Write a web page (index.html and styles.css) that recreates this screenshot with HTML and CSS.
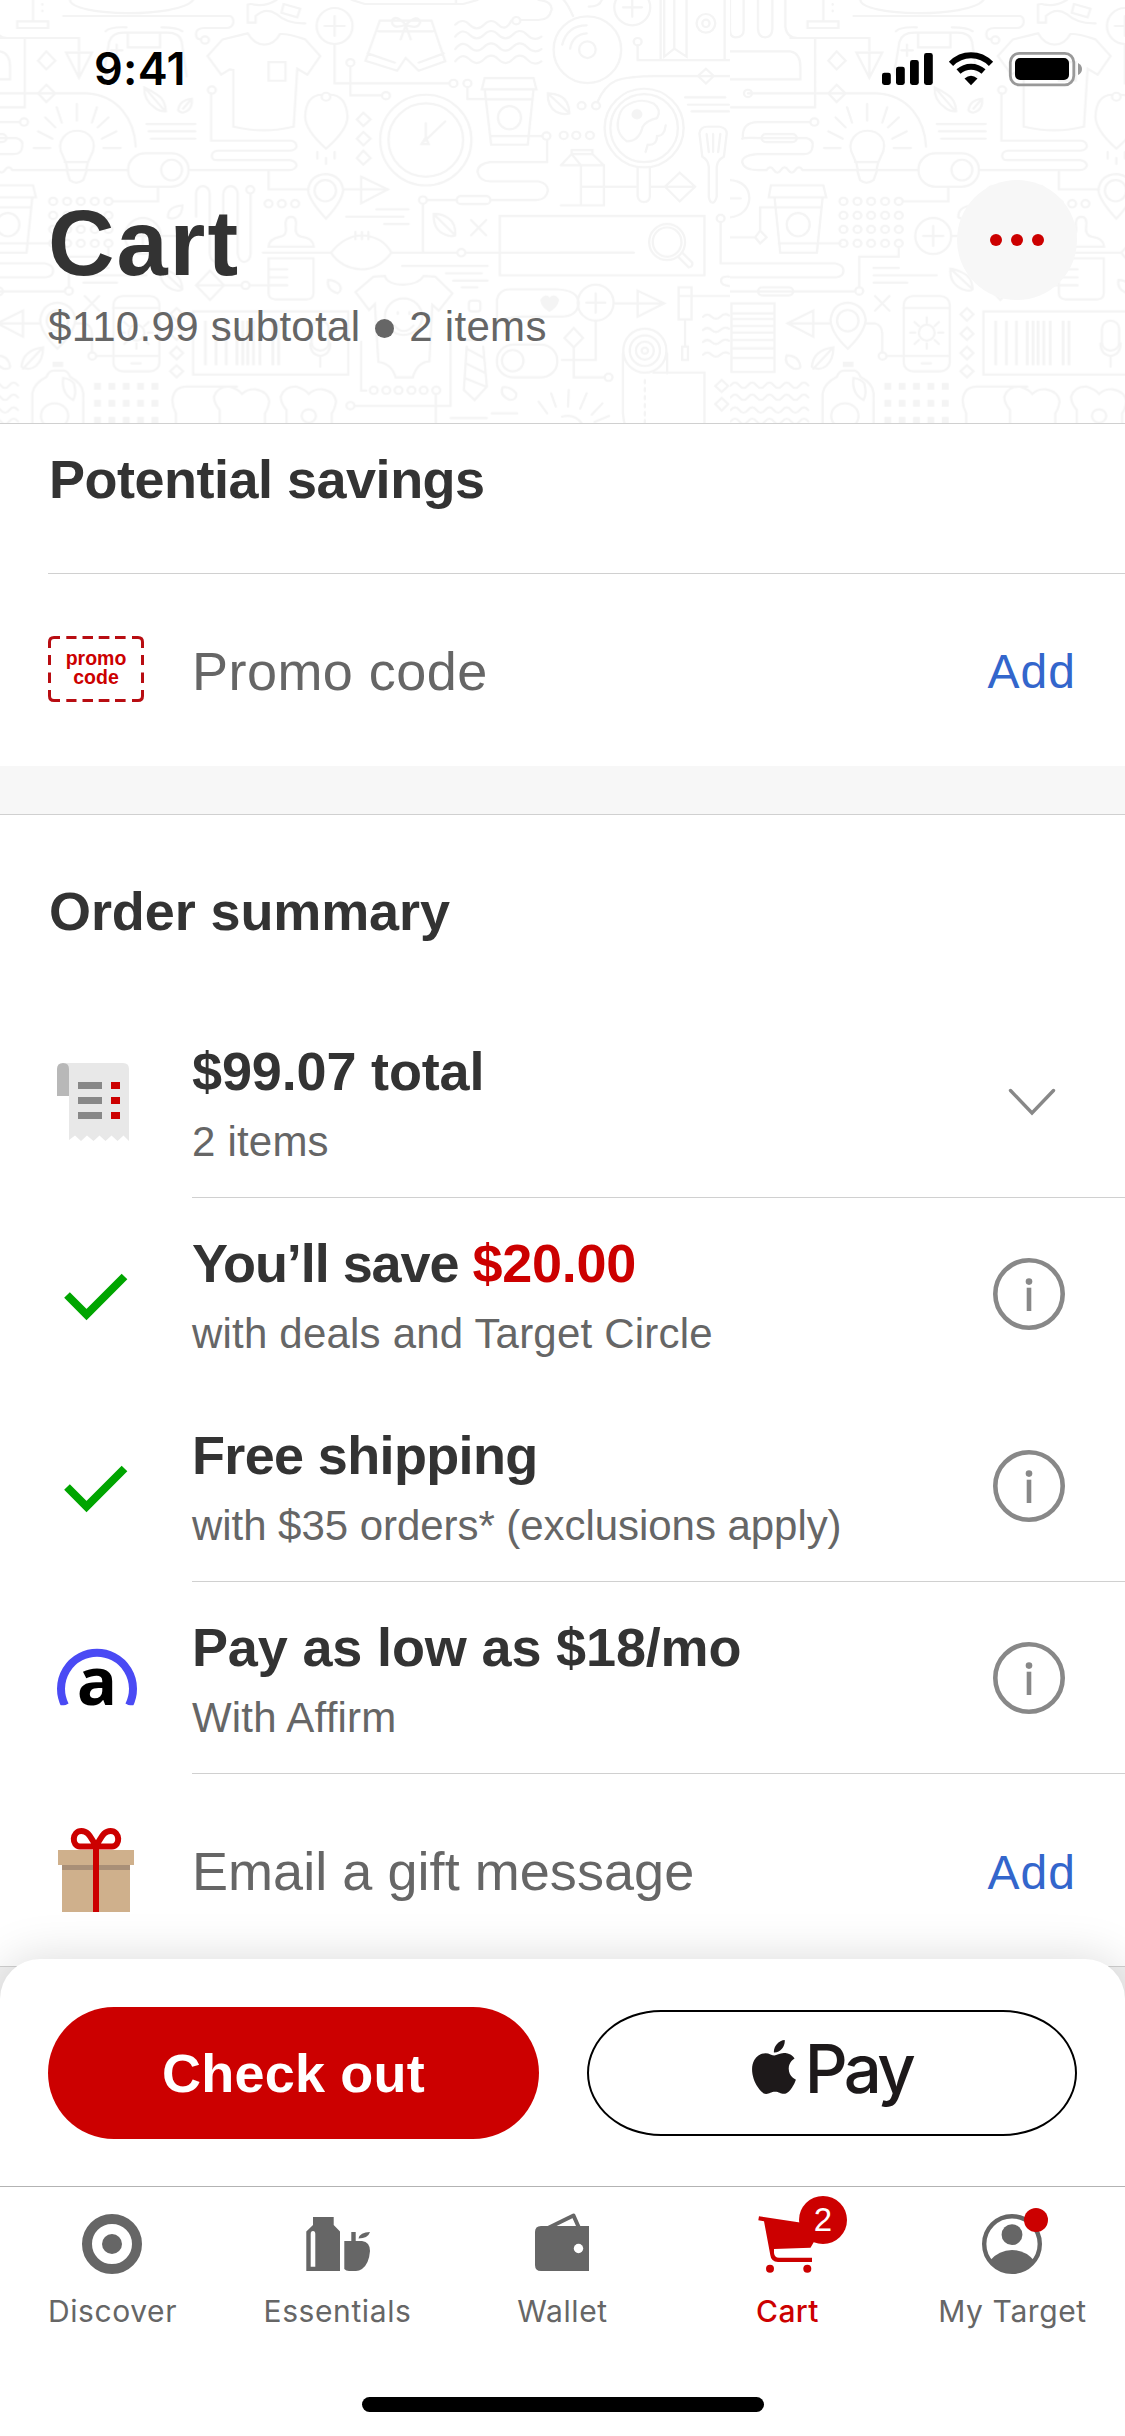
FILE: index.html
```html
<!DOCTYPE html>
<html lang="en">
<head>
<meta charset="utf-8">
<title>Cart</title>
<link rel="stylesheet" href="styles.css">
</head>
<body>
<div class="app">
  <header class="header">
    <svg class="doodles" width="1125" height="423" viewBox="0 0 1125 423">
      <defs>
        <pattern id="tile" x="-168" y="0" width="2201" height="1400" patternUnits="userSpaceOnUse" patternTransform="scale(0.35906 0.33333)" viewBox="-168 0 2201 1400">
          <g fill="none" stroke="#f4f4f4" stroke-width="6.5" stroke-linecap="round">
            <!-- laptop, sewing lines, game pad -->
            <path d="M92 0V62M48 64H134V84H48ZM118 12v2M118 32v2M195 0C200 50 500 55 538 0M176 48H640Q650 50 650 66Q648 84 630 84H570Q546 84 546 102Q546 118 558 118M0 114H220V152M-168 0V90Q-168 112-152 112Q-130 112-130 90V0M-90 0V85Q-90 112-70 112Q-50 112-50 85V0M-14 0V80Q-10 114 20 114"/>
            <circle cx="571" cy="120" r="11"/>
            <path d="M69 114V322H-166M184 158H256L220 234ZM220 158V234M129 154L154 182L129 208L106 182ZM129 254L154 280L129 306L106 280ZM-118 280H240C330 285 374 360 378 440M-168 154H0Q28 160 28 200V238H-168"/>
            <circle cx="-118" cy="280" r="11"/>
            <path d="M294 94Q305 80 352 82M450 82Q495 82 508 94M300 230Q285 220 294 190L304 125Q312 98 345 98H465Q500 98 506 125L520 230M356 98V142H446V98M325 134v34M309 151h32M402 262Q400 300 430 322Q445 336 462 334Q460 300 440 286Q420 270 402 262ZM402 262L460 334M534 296Q500 300 496 330Q500 338 510 338Q538 330 534 296ZM534 296L510 326M408 372H544M414 394H544M420 416H544"/>
            <!-- light bulb -->
            <path d="M214 312V362M158 322L172 368M270 322L256 368M126 352L154 382M302 352L272 382M106 394L146 416M324 394L284 416M94 444H140M288 444H336M188 510Q186 490 176 470C150 420 190 392 214 392C244 392 278 420 252 470Q242 490 240 510M180 486H246M186 510L194 540Q212 556 232 540L242 510M-132 416Q-136 366-90 366H55M-134 416Q-130 412-84 414H45Q66 420 62 440Q60 462 40 462H-92Q-134 466-134 486Q-130 510-90 510H-66q10-16 20 0t20 0t20 0t20 0t20 0H355"/>
            <circle cx="67" cy="366" r="11"/><rect x="-80" y="402" width="98" height="24" rx="12"/>
            <rect x="357" y="460" width="168" height="100" rx="48"/><ellipse cx="478" cy="510" rx="29" ry="31"/>
            <!-- shoe, shirt -->
            <path d="M690 14V68H712V48Q740 20 770 42Q800 72 850 70M690 14Q700 10 708 14Q740 20 770 0M790 12L836 26L828 52L784 38ZM650 210L640 208L616 224L578 168L620 118L690 100Q708 134 736 134Q764 134 780 102Q800 100 850 118L892 168L856 224L828 206L818 380Q736 402 650 380ZM748 186H795V242H748ZM588 280V422H812Q826 426 826 440Q822 452 806 452H606Q590 454 590 468Q590 482 606 480H806Q824 482 826 496Q822 510 806 510H525M748 510V568H860M958 568H1080"/>
            <circle cx="590" cy="270" r="11"/>
            <path d="M-168 540Q-116 545-114 595Q-118 645-168 652M-168 595H-138M-168 712H-98L-84 692L-66 712L-84 730L-98 712M-84 692V622H-40M-54 556H92L100 592H-60ZM-44 592L-28 758H74L90 592M-42 622H84M-32 730H140"/>
            <ellipse cx="22" cy="674" rx="32" ry="35"/>
            <!-- dot grid -->
            <g id="dots4"><circle cx="148" cy="604" r="11"/><circle cx="187" cy="604" r="11"/><circle cx="225" cy="604" r="11"/><circle cx="264" cy="604" r="11"/><circle cx="302" cy="604" r="11"/></g>
            <use href="#dots4" y="42"/><use href="#dots4" y="84"/><use href="#dots4" y="126"/>
            <path d="M316 604H440V562M-194 650V790H125Q148 795 148 812Q148 830 128 832H-168M-168 874H180M192 862V770H302V742M232 804H302M232 826H408M232 848H326"/>
            <circle cx="192" cy="873" r="11"/><rect x="-90" y="862" width="98" height="24" rx="12"/>
            <ellipse cx="398" cy="708" rx="50" ry="54"/><path d="M398 678V738M370 708H426M450 708H515M508 616Q466 620 468 652Q480 660 495 650Q508 640 508 616ZM446 806Q442 850 480 868Q500 876 508 868Q506 830 480 818Q460 808 446 806ZM446 806L508 868"/>
            <path d="M546 650V580Q548 560 565 558Q582 560 584 580V760Q586 785 604 786Q622 780 622 760V580Q626 558 644 558Q660 562 662 580V760Q664 784 680 786Q698 782 698 760V582M546 856L585 812L624 856L585 900ZM546 856H672M696 856H800"/>
            <circle cx="697" cy="569" r="11"/><circle cx="684" cy="856" r="11"/>
            <circle cx="748" cy="611" r="11"/><circle cx="785" cy="611" r="11"/><circle cx="822" cy="611" r="11"/>
            <!-- brush and jar -->
            <path d="M748 740H874Q872 714 840 710Q820 706 824 680Q828 650 810 650Q792 652 796 680Q800 708 780 710Q750 716 748 740ZM732 758H922M748 775H873V880Q872 898 855 898H765Q748 896 748 880ZM750 808H800M750 832H800M750 856H800M922 758Q960 706 1010 706Q1066 710 1090 758Q1056 808 1006 808Q950 804 922 758ZM990 696V718M1008 696V718M1026 696V718M914 840Q908 868 940 880Q956 870 944 852Q930 840 914 840Z"/>
            <!-- plus node, shorts, waves -->
            <ellipse cx="932" cy="78" rx="50" ry="54"/><path d="M932 48V108M904 78H960M932 134V250H1250M976 200V286H1064M1302 262V297H1350"/>
            <circle cx="976" cy="188" r="11"/><circle cx="1075" cy="287" r="11"/><circle cx="1263" cy="250" r="11"/><circle cx="1302" cy="250" r="11"/>
            <path d="M1058 62H1202L1240 184L1166 212L1130 174L1106 212L1018 182ZM1054 94H1206M1024 160L1100 188M1236 160L1166 188M1130 74Q1100 40 1092 62Q1090 90 1130 74Q1164 40 1170 66Q1166 90 1130 74ZM1130 76L1116 118M1130 76L1144 118M980 0L1016 12H1290L1330 0M1270 0V12M1500 0Q1540 5 1536 30Q1530 60 1500 60H1450"/>
            <path d="M1268 74q20-22 40 0t40 0t40 0t36 -12"/><circle cx="1438" cy="62" r="11"/>
            <g id="wave"><path d="M1268 110q20-28 40-6t40 0t40 0t40 0t40 0t40 6"/></g><use href="#wave" y="37"/><use href="#wave" y="74"/>
            <!-- pendant, pin -->
            <path d="M908 446Q850 390 850 350Q852 284 898 284M908 446Q968 390 968 350Q964 284 918 284M884 456v20M932 456v20M908 474v18M1012 338L1032 358L1012 378L994 358ZM1012 396L1032 416L1012 436L994 416ZM1012 452L1032 474L1012 494L994 474ZM908 656Q860 600 858 570Q864 524 908 522Q950 526 956 570Q952 606 908 656ZM1006 530L1080 568L1006 610Z"/>
            <circle cx="908" cy="290" r="12"/><ellipse cx="906" cy="572" rx="30" ry="32"/>
            <!-- clock -->
            <ellipse cx="1186" cy="420" rx="127" ry="136"/><ellipse cx="1186" cy="420" rx="104" ry="110"/><path d="M1186 370V420L1240 364M1186 412L1174 432H1194Z"/>
            <path d="M1048 628H1138M964 650H1124M1070 672H1138M1120 798H1358M1242 820H1342M1262 842H1358M1286 862H1330"/>
            <!-- coffee cup -->
            <path d="M1350 234H1486L1494 268H1342ZM1350 268L1368 434H1470L1486 268M1355 298H1482M1366 408H1510M1524 420V486H1365Q1330 492 1330 516Q1336 544 1365 544H1500Q1526 550 1526 572Q1522 598 1495 600H1366M1190 600H1272M1178 612V758M1090 758H1272M1298 758H1765"/>
            <ellipse cx="1419" cy="353" rx="32" ry="35"/><circle cx="1522" cy="408" r="11"/><circle cx="1178" cy="600" r="11"/><circle cx="1285" cy="758" r="11"/><rect x="1272" y="588" width="94" height="24" rx="12"/>
            <path d="M1208 642Q1206 690 1240 704Q1256 712 1268 706Q1270 670 1248 654Q1230 640 1208 642ZM1208 642L1268 706M1312 660L1354 706M1354 660L1312 706M1392 648H1962V826H1392ZM1526 280Q1524 320 1550 336Q1570 346 1586 340Q1584 300 1560 288Q1545 280 1526 280ZM1526 280L1586 340"/>
            <!-- baby suit -->
            <path d="M990 876L1040 830L1072 828Q1080 854 1124 854Q1166 852 1180 828L1212 830L1260 880L1222 932L1204 914L1196 1084Q1162 1086 1150 1132H1102Q1090 1090 1054 1086L1044 912L1028 930ZM1098 976Q1124 1010 1152 976M1108 936v6M1140 936v6M1006 1025V1172H1020M1255 1025V1218H990M1214 1184V1270M1285 1020H1350M1300 1040L1292 1170L1322 1200L1356 1160L1346 1040M1300 1046L1348 1074M1298 1090L1350 1118M1294 1134L1354 1160M1400 1162Q1390 1186 1420 1200Q1440 1200 1438 1180Q1420 1158 1400 1162ZM1500 1205L1524 1240M1535 1180L1548 1220M1255 1254H1356M1370 1240H1440"/>
            <ellipse cx="1124" cy="950" rx="52" ry="55"/>
            <circle cx="1041" cy="1171" r="11"/><circle cx="1076" cy="1171" r="11"/><circle cx="1110" cy="1171" r="11"/><circle cx="1146" cy="1171" r="11"/><circle cx="1180" cy="1171" r="11"/><circle cx="1215" cy="1171" r="11"/><circle cx="976" cy="1217" r="11"/>
            <rect x="1306" y="902" width="32" height="32" rx="8"/><path d="M1384 970V900Q1390 868 1420 868H1550Q1610 870 1612 910Q1608 950 1560 950H1450Q1400 952 1384 970Z"/><path d="M1508 900Q1520 880 1530 898Q1545 880 1554 900Q1550 920 1530 932Q1510 920 1508 900Z" fill="#f4f4f4"/>
            <rect x="1384" y="1034" width="168" height="98" rx="46"/><ellipse cx="1428" cy="1082" rx="30" ry="32"/>
            <!-- phone, pin -->
            <path d="M64 932V1010L-8 970ZM-8 970H112M160 1046Q114 1000 112 960Q118 910 160 908Q204 912 210 960Q206 1000 160 1046ZM210 970H235Q255 975 256 1000V1056M268 1068H440M236 888L276 932M276 888L236 932M120 1042Q64 1050 60 1100Q80 1114 100 1098Q120 1080 120 1042ZM120 1042L64 1106M-10 1066Q-20 1090 10 1106Q28 1108 28 1100Q24 1066-10 1066ZM315 924H443M366 1090H392"/>
            <rect x="316" y="888" width="128" height="226" rx="26"/><ellipse cx="160" cy="962" rx="30" ry="32"/><circle cx="257" cy="1068" r="11"/><ellipse cx="380" cy="998" rx="22" ry="24"/><path d="M380 952v16M380 1030v16M334 998h14M412 998h14M346 966l12 12M402 1020l12 12M414 966l-12 12M358 1020l-12 12"/>
            <!-- barcode -->
            <path d="M538 934H970V1124H538ZM864 1030Q864 1064 892 1068Q920 1064 920 1030M892 1068V1100"/><rect x="868" y="962" width="48" height="90" rx="24"/>
            <path d="M572 962V1096M602 962V1096M630 962V1096M660 962V1096M676 962V1096M690 962V1096M706 962V1096M724 962V1096M760 962V1096M776 962V1096" stroke-linecap="butt" stroke-width="8"/>
            <path d="M492 924L510 943L492 962L474 943ZM492 982L510 1001L492 1020L474 1001ZM492 1040L510 1059L492 1078L474 1059ZM492 1096L510 1114L492 1132L474 1114Z"/>
            <!-- bottle, squares, bread -->
            <path d="M90 1280V1180Q94 1150 130 1130Q136 1112 150 1112H180Q190 1115 195 1130Q230 1150 232 1180V1280M176 1134Q170 1180 204 1200Q214 1180 206 1150Q195 1136 176 1134Z"/><ellipse cx="152" cy="1248" rx="38" ry="38"/>
            <path d="M146 1093H176" stroke-width="16" stroke-linecap="butt"/>
            <path d="M262 1159H450M262 1210H450M262 1261H450" stroke-width="20" stroke-linecap="butt" stroke-dasharray="19 21"/>
            <path d="M490 1280V1240Q480 1220 480 1200Q484 1160 520 1160H660M612 1280V1230Q596 1210 596 1190Q606 1158 640 1160Q665 1168 674 1182Q690 1166 712 1168Q746 1174 750 1205Q746 1230 738 1240V1280M798 1280V1230Q782 1210 782 1190Q792 1158 826 1160Q850 1168 860 1182Q876 1166 898 1168Q932 1174 936 1205Q932 1230 924 1240V1280"/><circle cx="860" cy="1248" r="20"/>
            <g id="swell"><path d="M-166 1156q12-16 24 0t24 0t24 0t24 0t24 0t24 0t24 0t24 0t24 0"/></g><use href="#swell" y="36"/><use href="#swell" y="74"/><use href="#swell" y="108"/>
            <path d="M-164 910H-44V1116H-164ZM-164 940H-44M-164 957H-44M-164 978H-44M-164 998H-44M-164 1020H-44M-164 1045H-44M-164 1074H-44"/>
            <!-- record, bookmark, frying pan -->
            <ellipse cx="1636" cy="149" rx="94" ry="100"/><ellipse cx="1636" cy="149" rx="23" ry="25"/><path d="M1588 146Q1594 104 1634 100M1566 134Q1580 76 1634 76M1570 0Q1580 10 1596 48M1640 20Q1670 20 1676 0"/>
            <ellipse cx="1761" cy="22" rx="50" ry="54"/><path d="M1761-10V50M1735 22H1788M1776 136V180H2033M1840 0V176M1850 0V170L1878 146L1912 170V0M1878 0V146M2018 0V180"/><circle cx="1776" cy="125" r="11"/>
            <ellipse cx="1966" cy="70" rx="26" ry="28"/><ellipse cx="1966" cy="70" rx="10" ry="11"/>
            <path d="M2033 228H1830C1720 228 1690 240 1664 306"/><circle cx="1660" cy="317" r="11"/><circle cx="1620" cy="317" r="11"/><circle cx="1605" cy="406" r="11"/><circle cx="1643" cy="406" r="11"/><circle cx="1570" cy="406" r="11"/>
            <path d="M1966 206L1988 228L1966 250L1944 228Z"/>
            <ellipse cx="1794" cy="384" rx="110" ry="118"/><ellipse cx="1794" cy="384" rx="94" ry="102"/><path d="M1740 320Q1780 290 1820 310Q1844 330 1830 354Q1800 362 1790 380Q1780 424 1746 424Q1714 400 1722 360Q1726 332 1740 320ZM1854 376Q1850 410 1830 408Q1830 436 1804 434L1798 456M1776 500V590Q1780 606 1792 606Q1808 606 1810 590V500"/><circle cx="1774" cy="343" r="12" fill="#f4f4f4"/>
            <path d="M1908 292H2020M1916 314H2030M1926 334H2030M1948 400Q1950 380 1970 380H2004Q2024 384 2024 400L2016 470Q1998 480 1996 500V590Q1992 608 1984 608Q1976 606 1974 590V500Q1972 480 1956 470ZM1968 402L1974 456M1986 402V456M2006 402L2000 456"/>
            <!-- milk carton -->
            <path d="M1562 496H1682V616H1562M1618 496V616M1562 496L1592 462H1650L1682 496M1592 450H1650V462M1592 450V462L1618 496M1618 560H1772M1812 560H1930M1893 518L1936 560L1893 604L1852 560ZM1560 758H1765"/>
            <ellipse cx="1858" cy="726" rx="50" ry="54"/><ellipse cx="1858" cy="726" rx="40" ry="44"/><path d="M1888 770L1918 802Q1930 800 1928 788L1900 758M2007 666V790H2033M2030 830Q2008 828 2008 842Q2008 856 2030 858"/><circle cx="2007" cy="655" r="11"/>
            <!-- towel roll -->
            <ellipse cx="1659" cy="908" rx="50" ry="54"/><path d="M1659 880V938M1633 908H1686M1710 910H1846M1776 872L1850 910L1776 950ZM1659 962V1080H1565M1598 984L1624 1014L1598 1042L1572 1014ZM1598 1042V1132H1684M1890 862H1926V958H1890ZM1890 888H2033M1908 958V1040M1900 1040H1916V1080H1900Z"/><circle cx="1695" cy="1132" r="11"/>
            <ellipse cx="1796" cy="1052" rx="60" ry="66"/><ellipse cx="1796" cy="1052" rx="42" ry="46"/><ellipse cx="1796" cy="1052" rx="25" ry="27"/><circle cx="1796" cy="1052" r="9"/><path d="M1735 1060V1240Q1736 1260 1742 1280M1858 1060V1120M1820 1118H1962V1280"/><path d="M1796 1140V1280" stroke-dasharray="10 14"/>
            <path d="M1958 950q12-12 24 0t24 0t24-4M1958 990q12-12 24 0t24 0t24-4M1958 1026q12-12 24 0t24 0t24-4M1958 1064q12-12 24 0t24 0t24-4M2010 1140L2028 1158L2010 1176L1992 1158ZM2010 1194L2028 1212L2010 1232L1992 1212ZM1584 1170L1582 1220M1634 1180L1616 1226M1678 1210L1648 1244M1696 1248L1656 1266M1565 1250Q1600 1240 1620 1270"/>
          </g>
        </pattern>
      </defs>
      <rect width="1125" height="423" fill="url(#tile)"/>
    </svg>
    <div class="status">
      <span class="time">9:41</span>
      <svg class="indicators" width="204" height="36" viewBox="881 51 204 36">
        <g><rect x="882" y="72.7" width="8.8" height="12.3" rx="2.4"/><rect x="896" y="66.7" width="8.8" height="18.3" rx="2.4"/><rect x="910" y="60" width="8.8" height="25" rx="2.4"/><rect x="924" y="53" width="8.8" height="32" rx="2.4"/></g>
        <g fill="none" stroke="#000" stroke-width="6"><path d="M951 63.8Q959.5 55.2 971 55.2T991 63.8"/><path d="M958.500 71.600Q964 66.700 971 66.700T983.500 71.600"/></g>
        <path d="M964.500 78.500Q971 72.800 977.500 78.500L971 85.300Z"/>
        <rect x="1010.300" y="53.300" width="63.500" height="31.500" rx="9" fill="none" stroke="#999" stroke-width="2.800"/>
        <rect x="1015" y="58" width="54" height="22" rx="5"/><path d="M1078 63Q1082 65 1082 69T1078 75Z" fill="#999"/>
      </svg>
    </div>
    <div class="heading">
      <div>
        <h1>Cart</h1>
        <p class="subtotal">$110.99 subtotal <i class="bullet"></i> 2 items</p>
      </div>
      <button class="more"><i></i><i></i><i></i></button>
    </div>
  </header>

  <main class="content">
    <section class="savings">
      <h2>Potential savings</h2>
      <div class="row single">
        <svg class="icon" viewBox="48 574 96 192">
          <path class="promo-dash" d="M49.500 649V643Q49.500 638.500 54 638.500H60M66.300 638.500H76.500M82.500 638.500H93M98.700 638.500H109.400M115 638.500H125.600M132 638.500H138Q142.500 638.500 142.500 643V649M142.500 656V666M142.500 673.500V684M142.500 691V697Q142.500 701.500 138 701.500H132M125.600 701.500H115M109.400 701.500H98.700M93 701.500H82.500M76.500 701.500H66.300M60 701.500H54Q49.500 701.500 49.500 697V691M49.500 684V673.500M49.500 666V656"/>
          <text class="promo-text" x="96" y="665.500">promo</text><text class="promo-text" x="96" y="684.500">code</text>
        </svg>
        <div class="body"><span class="label">Promo code</span><a class="add">Add</a></div>
      </div>
    </section>

    <section class="summary">
      <h2>Order summary</h2>
      <div class="row">
        <svg class="icon" viewBox="48 1006 96 192">
          <path fill="#e8e8e8" d="M63 1063H123Q129 1063 129 1069V1141L123.500 1135.500L117.500 1141L111.500 1135.500L105.500 1141L99.500 1135.500L93.500 1141L87 1135.500L81 1141L75 1135.500L69 1140V1069Z"/>
          <path fill="#b8b8b8" d="M57 1096V1069Q57 1063 63 1063T69 1069V1096Z"/>
          <path stroke="#888" stroke-width="7" d="M78 1085.500H102M78 1100.500H102M78 1115.500H102"/>
          <path stroke="#c00" stroke-width="7" d="M111 1085.500H120M111 1100.500H120M111 1115.500H120"/>
        </svg>
        <div class="body ruled">
          <div><h3 class="total">$99.07 total</h3><p>2 items</p></div>
          <svg class="chevron" width="48" height="28" viewBox="0 0 48 28"><path d="M2.500 2.500L24 25L45.500 2.500"/></svg>
        </div>
      </div>
      <div class="row">
        <svg class="icon" viewBox="48 1198 96 192"><path class="check" d="M67 1295L86.500 1314.500L124.500 1276.500"/></svg>
        <div class="body">
          <div><h3 class="save">You’ll save <b>$20.00</b></h3><p>with deals and Target Circle</p></div>
          <svg class="info" viewBox="0 0 72 72"><circle cx="36" cy="36" r="33.700"/><path d="M36 29.700V53"/><circle class="pip" cx="36" cy="23.600" r="3.300"/></svg>
        </div>
      </div>
      <div class="row">
        <svg class="icon" viewBox="48 1198 96 192"><path class="check" d="M67 1295L86.500 1314.500L124.500 1276.500"/></svg>
        <div class="body ruled">
          <div><h3 class="ship">Free shipping</h3><p class="exclusions">with $35 orders* (exclusions apply)</p></div>
          <svg class="info" viewBox="0 0 72 72"><circle cx="36" cy="36" r="33.700"/><path d="M36 29.700V53"/><circle class="pip" cx="36" cy="23.600" r="3.300"/></svg>
        </div>
      </div>
      <div class="row">
        <svg class="icon" viewBox="48 1582 96 192">
          <path d="M65 1705.300A36 36 0 1 1 129 1705.300" fill="none" stroke="#4a4af4" stroke-width="8"/>
          <path d="M55 1705.300H74V1712H55ZM120 1705.300H140V1712H120Z" fill="#fff"/>
          <text class="affirm" x="97" y="1705.300">a</text>
        </svg>
        <div class="body ruled">
          <div><h3 class="pay">Pay as low as $18/mo</h3><p>With Affirm</p></div>
          <svg class="info" viewBox="0 0 72 72"><circle cx="36" cy="36" r="33.700"/><path d="M36 29.700V53"/><circle class="pip" cx="36" cy="23.600" r="3.300"/></svg>
        </div>
      </div>
      <div class="row single">
        <svg class="icon" viewBox="48 1774 96 192">
          <path fill="#cfb08c" d="M58 1850H134V1865H130V1912H62V1865H58Z"/><path fill="#a98f77" d="M62 1865H130V1870H62Z"/>
          <path fill="#c00" d="M93 1849H99V1912H93Z"/>
          <path fill="none" stroke="#c00" stroke-width="6" stroke-linejoin="round" d="M96 1846.500H80C71.500 1846.500 71.500 1831 81.500 1831C89 1831 91 1839 96 1845.500C101 1839 103 1831 110.500 1831C120.500 1831 120.500 1846.500 112 1846.500Z"/>
        </svg>
        <div class="body"><span class="label gift">Email a gift message</span><a class="add">Add</a></div>
      </div>
    </section>

    <div class="sheet">
      <button class="checkout">Check out</button>
      <button class="apple-pay">
        <svg width="44" height="54" viewBox="2.200 0 19.600 24"><path fill="#1d191a" d="M12.152 6.896c-.948 0-2.415-1.078-3.960-1.040-2.040.027-3.910 1.183-4.961 3.014-2.117 3.675-.546 9.103 1.519 12.090 1.013 1.454 2.208 3.090 3.792 3.039 1.520-.065 2.090-.987 3.935-.987 1.831 0 2.350.987 3.960.948 1.637-.026 2.676-1.480 3.676-2.948 1.156-1.688 1.636-3.325 1.662-3.415-.039-.013-3.182-1.221-3.220-4.857-.026-3.040 2.480-4.494 2.597-4.559-1.429-2.090-3.623-2.324-4.390-2.376-2-.156-3.675 1.090-4.610 1.090zM15.530 3.830c.843-1.012 1.400-2.427 1.245-3.830-1.207.052-2.662.805-3.532 1.818-.780.896-1.454 2.338-1.273 3.714 1.338.104 2.715-.688 3.559-1.701"/></svg>
        <span>Pay</span>
      </button>
    </div>
  </main>

  <nav class="tabs">
    <a class="tab"><svg viewBox="0 2187 225 106"><circle cx="112" cy="2244" r="25" fill="none" stroke="#666" stroke-width="10"/><circle cx="112" cy="2244" r="10"/></svg><span>Discover</span></a>
    <a class="tab"><svg viewBox="225 2187 225 106">
      <path d="M313 2217H333.700V2225L340 2231.500V2271H306.300V2231.500L313 2225Z"/><path fill="#fff" d="M310.700 2266.700V2234Q310.700 2231 313 2231T315.300 2234V2266.700Z"/>
      <path d="M344.300 2241H351.300V2232H355.700V2241H362Q370 2242 370 2251Q369 2264 362 2269Q359 2271 356 2271H349Q346 2271 344.300 2269Z"/><path d="M358.500 2238.500Q360 2232 370 2232Q368 2238.500 358.500 2238.500Z"/></svg><span>Essentials</span></a>
    <a class="tab"><svg viewBox="450 2187 225 106">
      <path fill="none" stroke="#666" stroke-width="4" stroke-linejoin="round" d="M546 2229L573.500 2215.500L579.500 2229"/><path d="M541 2226H589V2271H541Q535 2271 535 2265V2232Q535 2226 541 2226Z"/><circle cx="578.500" cy="2248.500" r="4.700" fill="#fff"/></svg><span>Wallet</span></a>
    <a class="tab active"><svg viewBox="675 2187 225 106">
      <path d="M759 2216.300L800 2222.500L815 2240L810.500 2247.700L774 2249V2253Q774.500 2257.700 779 2257.700H812V2262H778Q771 2261.500 770.300 2255L764 2221.300L758.300 2220.300Z"/><circle cx="770" cy="2268.700" r="4"/><circle cx="807.300" cy="2268.700" r="4"/>
      <circle cx="823" cy="2220" r="24"/><text class="count" x="823" y="2231">2</text></svg><span>Cart</span></a>
    <a class="tab"><svg viewBox="900 2187 225 106">
      <circle cx="1012" cy="2244" r="27.800" fill="none" stroke="#666" stroke-width="4.400"/><circle cx="1012" cy="2234.700" r="10.400"/><path d="M990 2260.500Q999 2250 1012 2250T1034 2260.500Q1026 2273 1012 2273T990 2260.500Z"/><circle cx="1036" cy="2220" r="12" fill="#c00"/></svg><span>My Target</span></a>
  </nav>
  <div class="home"></div>
</div>
</body>
</html>
```
FILE: styles.css
```css
* { box-sizing: border-box; margin: 0; padding: 0; }

body {
  width: 1125px;
  background: #fff;
  color: #333;
  font-family: "Liberation Sans", Arial, sans-serif;
}

button { border: 0; background: none; font: inherit; }

.app { display: flex; flex-direction: column; width: 1125px; height: 2436px; overflow: hidden; }

/* Header */
.header { position: relative; height: 424px; border-bottom: 1px solid #d0d0d0; }
.doodles { position: absolute; inset: 0; }

.status {
  position: relative;
  display: flex;
  justify-content: space-between;
  height: 132px;
  padding: 41px 40px 0 94px;
}
.time { font: 600 45px/56px Inter, sans-serif; letter-spacing: 0.3px; color: #000; }
.indicators { margin-top: 10px; }

.heading {
  position: relative;
  display: flex;
  justify-content: space-between;
  padding: 48px 48px 0;
}
h1 { margin-top: 13px; font-size: 92px; line-height: 100px; letter-spacing: 2px; }
.subtotal { margin-top: 10px; font-size: 42px; line-height: 48px; letter-spacing: 0.3px; color: #666; white-space: nowrap; }
.bullet { display: inline-block; width: 19px; height: 19px; margin: 0 3px; border-radius: 50%; background: #666; vertical-align: 3px; }

.more {
  display: flex;
  align-items: center;
  justify-content: center;
  gap: 9px;
  width: 120px;
  height: 120px;
  border-radius: 50%;
  background: #f7f7f7;
}
.more i { width: 12px; height: 12px; border-radius: 50%; background: #c00; }

/* Content */
.content { position: relative; height: 1762px; overflow: hidden; background: #f2f2f2; }
section { background: #fff; }
h2 { font-size: 54px; line-height: 60px; letter-spacing: -0.1px; }

.savings h2 { height: 149px; padding: 25px 0 0 49px; letter-spacing: -0.5px; }
.savings .row { height: 193px; }
.savings .row::before { content: ""; position: absolute; left: 48px; right: 0; top: 0; height: 1px; background: #d0d0d0; }
.summary { margin-top: 48px; border-top: 1px solid #d0d0d0; border-bottom: 1px solid #d0d0d0; }
.savings + .summary { box-shadow: 0 -48px #f7f7f7; }
.summary h2 { height: 191px; padding: 66px 0 0 49px; }

.row { position: relative; display: flex; gap: 48px; height: 192px; padding-left: 48px; }
.icon { flex: none; width: 96px; height: 192px; }
.body { flex: 1; display: flex; justify-content: space-between; padding: 35px 48px 0 0; white-space: nowrap; }
.ruled { border-bottom: 1px solid #d0d0d0; }
h3 { font-size: 54px; line-height: 60px; }
h3 b { letter-spacing: -0.3px; color: #c00; }
.total { letter-spacing: -0.15px; }
.save { letter-spacing: -1.05px; }
.ship { letter-spacing: -0.65px; }
.pay { letter-spacing: -0.15px; }
.body p { margin-top: 17px; font-size: 42px; line-height: 48px; letter-spacing: 0.2px; color: #666; }
.body .exclusions { letter-spacing: -0.05px; }
.single .body { padding-top: 68px; }
.label { font-size: 54px; line-height: 60px; letter-spacing: 0.45px; color: #666; }
.gift { margin-top: -1px; letter-spacing: 0.05px; }
.add { margin-right: 1px; font-size: 48px; line-height: 62px; letter-spacing: 1px; color: #3366cc; }

.info { width: 72px; height: 72px; margin: 25px 12px 0 0; fill: none; stroke: #888; stroke-width: 4.6; }
.info .pip { fill: #888; stroke: none; }
.chevron { margin: 47px 21px 0 0; fill: none; stroke: #888; stroke-width: 3.4; stroke-linecap: round; }
.check { fill: none; stroke: #00a500; stroke-width: 8; }
.promo-dash { fill: none; stroke: #b80d12; stroke-width: 3; }
.promo-text { font-size: 19.5px; font-weight: 700; fill: #c00; text-anchor: middle; }
.affirm { font: 700 67px "Open Sans", sans-serif; fill: #000; text-anchor: middle; }

/* Checkout sheet, floating over the list */
.sheet {
  position: absolute;
  left: 0;
  right: 0;
  bottom: 0;
  display: flex;
  gap: 48px;
  height: 227px;
  padding: 48px 48px 0;
  border-radius: 40px 40px 0 0;
  background: #fff;
  box-shadow: 0 0 48px rgba(0, 0, 0, 0.15);
}
.checkout { width: 491px; height: 132px; border-radius: 66px; background: #c00; color: #fff; font-size: 54px; font-weight: 700; letter-spacing: 0.2px; }
.apple-pay {
  display: flex;
  align-items: center;
  justify-content: center;
  gap: 9px;
  width: 490px;
  height: 126px;
  margin-top: 3px;
  border: 2px solid #000;
  border-radius: 74px / 63px;
  color: #1d191a;
}
.apple-pay svg { margin-top: -12px; }
.apple-pay span { margin-top: -9px; font: 500 67px/80px Inter, sans-serif; letter-spacing: -3.6px; }

/* Tab bar */
.tabs { display: grid; grid-template-columns: repeat(5, 225px); height: 211px; border-top: 1px solid #b3b3b3; background: #fff; }
.tab { display: flex; flex-direction: column; align-items: center; fill: #666; color: #666; font: 400 30px/36px Inter, sans-serif; letter-spacing: 0.6px; }
.tab svg { width: 225px; height: 106px; }
.active { fill: #c00; color: #c00; font-weight: 500; letter-spacing: 0.4px; }
.count { font: 400 33px "Liberation Sans", sans-serif; fill: #fff; text-anchor: middle; letter-spacing: 0; }

.home { width: 402px; height: 15px; margin: 0 auto; border-radius: 8px; background: #000; }
```
